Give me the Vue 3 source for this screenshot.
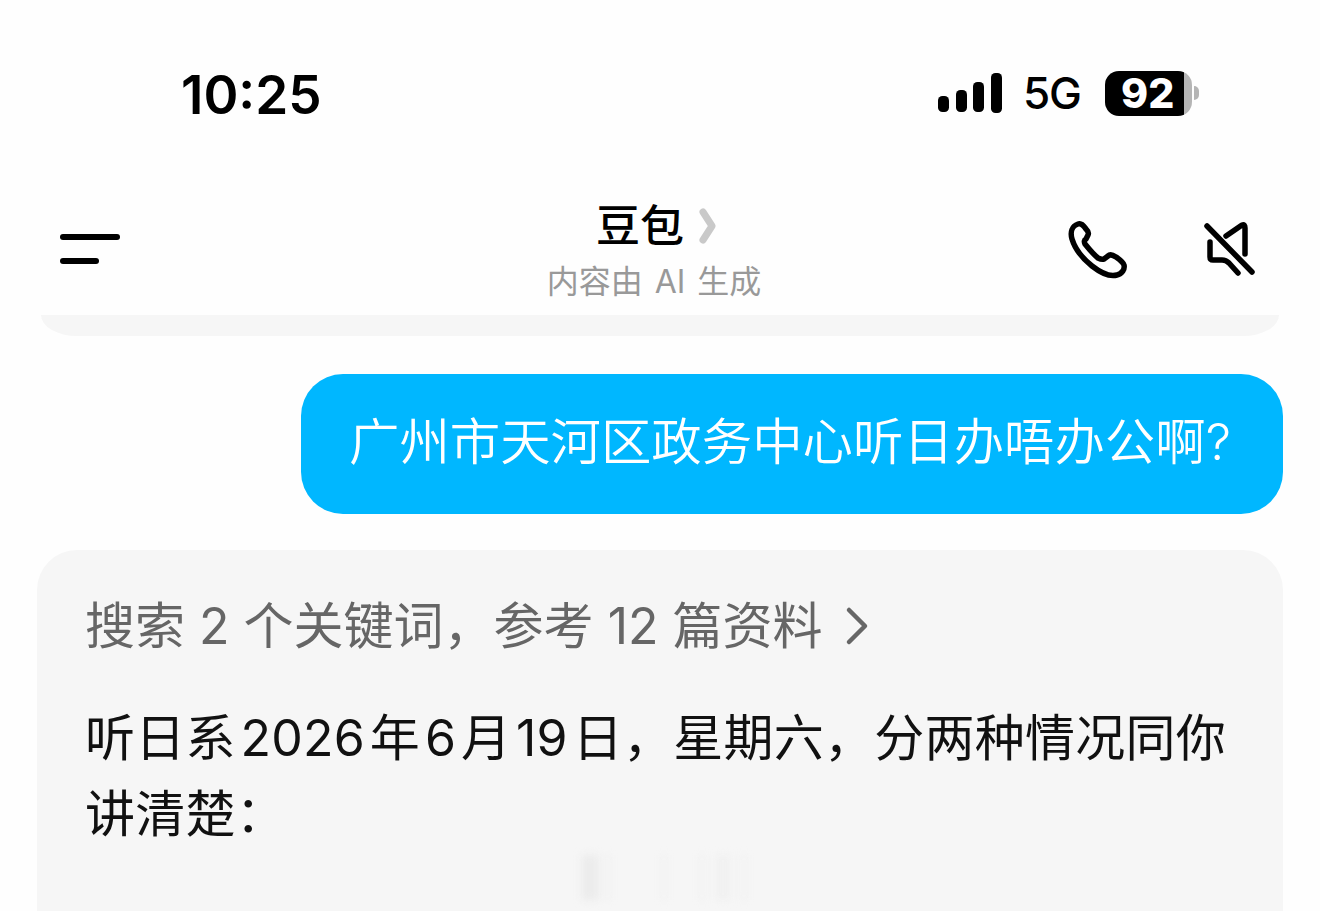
<template>
  <div class="page">
    <div class="status-bar">
      <span class="time">10:25</span>
      <div class="status-right">
        <svg class="signal" width="66" height="44" viewBox="0 0 66 44">
          <rect x="1" y="25" width="11" height="16" rx="4.5" />
          <rect x="19" y="19" width="11" height="22" rx="4.5" />
          <rect x="36" y="11" width="11" height="30" rx="4.5" />
          <rect x="54" y="2" width="11" height="40" rx="4.5" />
        </svg>
        <span class="net">5G</span>
        <div class="battery">
          <div class="battery-body">
            <span class="battery-num">92</span>
          </div>
          <span class="battery-cap"></span>
        </div>
      </div>
    </div>

    <div class="top-bar">
      <div class="menu-icon">
        <span class="line-long"></span>
        <span class="line-short"></span>
      </div>
      <div class="title-box">
        <div class="title">
          <span>豆包</span>
          <svg width="20" height="36" viewBox="0 0 20 36">
            <path d="M5 4 L14 18 L5 32" fill="none" stroke="#c9c9c9" stroke-width="7" stroke-linecap="round" stroke-linejoin="round" />
          </svg>
        </div>
        <div class="subtitle">内容由 AI 生成</div>
      </div>
      <div class="actions">
        <svg width="60" height="60" viewBox="0 0 60 60" fill="none" stroke="#000" stroke-width="5.5" stroke-linecap="round" stroke-linejoin="round">
          <path d="M10 3 C4 5 2 11 4 18 C7 28 14 37 24 45 C33 52 42 56 49 54 C54 53 57 48 56 44 C55 41 52 39 48 36 C45 34 42 33 40 35 L36 38 C34 39 32 38 30 37 C25 33 21 28 17 23 C16 21 16 19 18 18 L20 14 C21 12 20 10 18 8 C15 4 13 2 10 3 Z" />
        </svg>
        <svg width="60" height="60" viewBox="0 0 60 60" fill="none" stroke="#000" stroke-width="5.5" stroke-linecap="round" stroke-linejoin="round">
          <path d="M5 5 L50 51" />
          <path d="M24 15 L40 4 Q43 3 43 7 L43 33" />
          <path d="M8 21 L8 36 Q8 39 11 39 L20 39 Q24 39 27 42 L36 52" />
        </svg>
      </div>
    </div>

    <div class="prev-card"></div>

    <div class="user-row">
      <div class="bubble">广州市天河区政务中心听日办唔办公啊?</div>
    </div>

    <div class="answer">
      <div class="search-line">
        <span>搜索 2 个关键词&#xFF0C;参考 12 篇资料</span>
        <svg width="24" height="40" viewBox="0 0 24 40">
          <path d="M4 4 L20 20 L4 36" fill="none" stroke="#666" stroke-width="4.5" stroke-linecap="round" stroke-linejoin="round" />
        </svg>
      </div>
      <p class="answer-text">听日系&#x200A;2026&#x200A;年&#x200A;6&#x200A;月&#x200A;19&#x200A;日&#xFF0C;星期六&#xFF0C;分两种情况同你讲清楚&#xFF1A;</p>
      <div class="watermark">
        <span v-for="m in marks" :key="m.x" :style="{ left: m.x + 'px', width: m.w + 'px', opacity: m.o }"></span>
      </div>
    </div>
  </div>
</template>

<script setup>
// faint blurred watermark strokes at the bottom of the answer card
const marks = [
  { x: 12, w: 16, o: 0.6 },
  { x: 34, w: 8, o: 0.2 },
  { x: 90, w: 8, o: 0.2 },
  { x: 128, w: 8, o: 0.2 },
  { x: 146, w: 14, o: 0.25 },
  { x: 170, w: 8, o: 0.2 }
]
</script>

<style scoped>
.page { width: 1320px; height: 911px; overflow: hidden; background: #fefefe; font-family: "Inter", "Noto Sans CJK SC", sans-serif; }

.status-bar { height: 190px; padding: 0 121px 0 181px; display: flex; justify-content: space-between; align-items: flex-start; box-sizing: border-box; }
.time { margin-top: 62px; font-size: 53px; line-height: 66px; font-weight: 600; color: #000; }
.status-right { margin-top: 70px; display: flex; align-items: center; }
.signal { fill: #000; }
.net { margin-left: 20px; font-size: 44px; line-height: 46px; font-weight: 500; color: #000; letter-spacing: -1px; }
.battery { margin-left: 24px; display: flex; align-items: center; }
.battery-body { width: 87px; height: 45px; border-radius: 14px; background: linear-gradient(90deg, #000 91%, #b5b5b5 91%); display: flex; align-items: center; padding-left: 16px; box-sizing: border-box; }
.battery-num { font-size: 41px; line-height: 45px; font-weight: 800; color: #fff; }
.battery-cap { width: 5px; height: 14px; margin-left: 2px; background: #b5b5b5; border-radius: 0 6px 6px 0; }

.top-bar { height: 125px; padding: 0 58px 0 60px; display: flex; justify-content: space-between; align-items: flex-start; position: relative; }
.menu-icon { margin-top: 44px; width: 60px; display: flex; flex-direction: column; gap: 18px; }
.menu-icon span { height: 6px; border-radius: 3px; background: #000; display: block; }
.line-short { width: 39px; }
.title-box { position: absolute; left: 0; right: 12px; top: 6px; display: flex; flex-direction: column; align-items: center; }
.title { height: 60px; display: flex; align-items: center; gap: 14px; font-size: 44px; line-height: 60px; font-weight: 500; color: #000; padding-left: 6px; }
.subtitle { margin-top: 4px; font-size: 32px; line-height: 44px; color: #999; word-spacing: 3px; }
.actions { margin-top: 31px; display: flex; gap: 74px; }

.prev-card { height: 21px; margin: 0 41px; background: #f6f6f6; border-radius: 0 0 36px 36px / 0 0 21px 21px; }

.user-row { margin-top: 38px; padding-right: 37px; display: flex; justify-content: flex-end; }
.bubble { width: 982px; height: 140px; box-sizing: border-box; padding-left: 48px; border-radius: 42px; background: #00b7ff; color: #fff; font-size: 50.4px; font-weight: 350; line-height: 136px; white-space: nowrap; }

.answer { position: relative; margin: 36px 37px 0; height: 400px; padding: 44px 48px 0; background: #f6f6f6; border-radius: 40px; }
.search-line { display: flex; align-items: center; gap: 22px; font-size: 50px; line-height: 64px; color: #666; white-space: nowrap; }
.answer-text { margin: 42px 0 0; font-size: 50px; line-height: 76px; color: #111; letter-spacing: 0.25px; }
.watermark { position: absolute; left: 533px; top: 305px; width: 200px; height: 45px; filter: blur(4px); }
.watermark span { position: absolute; top: 0; height: 45px; background: #e4e4e4; }
</style>
